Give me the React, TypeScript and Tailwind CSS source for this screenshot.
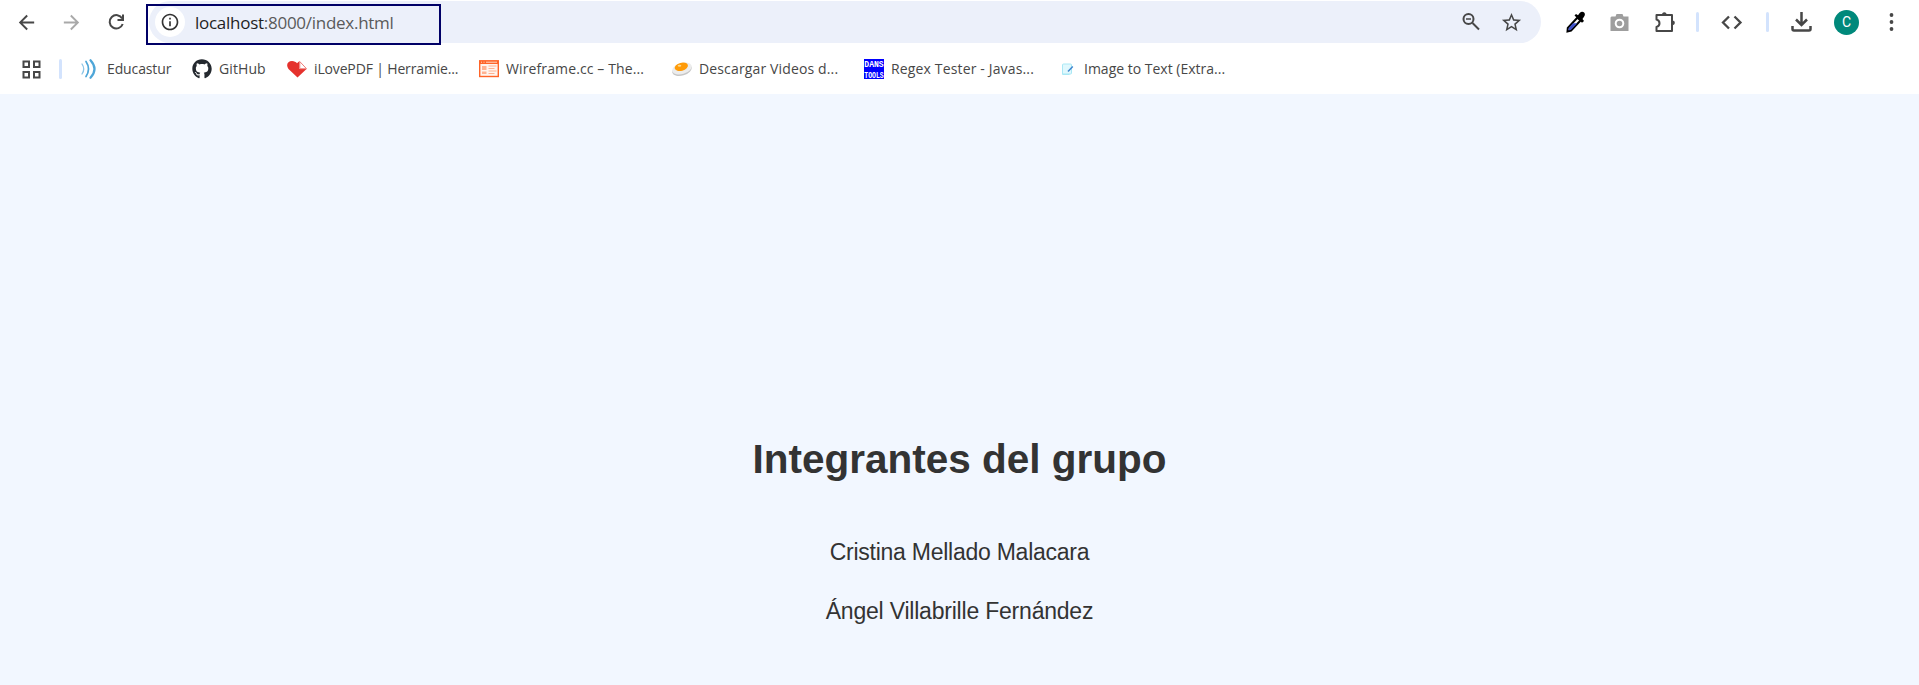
import type { ReactNode } from "react";
import { MdArrowBack, MdArrowForward, MdInfoOutline, MdStarOutline } from "react-icons/md";
import { FaGithub } from "react-icons/fa";

const svg = "block h-5 w-5 shrink-0";

const Educastur = () => (
  <svg className={svg} viewBox="0 0 20 20" fill="none" stroke="#4ea6d8" strokeLinecap="round">
    <path d="M2 5Q5.500 10 2 15" strokeWidth="1.300" stroke="#8cc5e6" />
    <path d="M6 2.500Q11 10 6 17.500" strokeWidth="1.700" />
    <path d="M10.500 1.200Q18.500 10 10.500 18.800" strokeWidth="2.200" />
  </svg>
);

const Heart = () => (
  <svg className={svg} viewBox="0 0 20 20">
    <path d="M10.500 18.500 1.500 10C-1.500 6 .8 2 5 2c2.400 0 3.800 1 5 2.200L12.500 2v8H19.500Z" fill="#e5322d" />
    <path d="M12.800 2.600v7.100h6.700Z" fill="#fff" stroke="#ee7d79" strokeWidth="1" />
  </svg>
);

const Wireframe = () => (
  <svg className={svg} viewBox="0 0 20 20">
    <rect x="0.700" y="2" width="18.600" height="15.500" fill="#fff4ee" stroke="#ff6428" strokeWidth="1.400" />
    <path d="M0 1.300h20v3.700H0z" fill="#ff6428" />
    <path d="M2 3.200h1M4.500 3.200h1M7 3.200h11" stroke="#ffd8c6" strokeWidth="1" />
    <path d="M3 7h4.500v4H3zM3 12.500h4.500v2.500H3z" fill="#ffb291" />
    <path d="M9.500 7h8M9.500 9.500h6M9.500 12h8M9.500 14.500h6" stroke="#ffb291" strokeWidth="1.200" />
  </svg>
);

const Egg = () => (
  <svg className={svg} viewBox="0 0 20 20">
    <ellipse cx="10" cy="11" rx="10" ry="5.600" transform="rotate(-17 10 11)" fill="#c6c6c6" />
    <ellipse cx="10" cy="9.500" rx="10" ry="5.600" transform="rotate(-17 10 9.500)" fill="#ececec" />
    <ellipse cx="9.300" cy="7.800" rx="6.800" ry="4" transform="rotate(-15 9.300 7.800)" fill="#ff9b08" />
    <ellipse cx="7.500" cy="6.800" rx="1.800" ry="1" fill="#ffd98a" />
  </svg>
);

const DansTools = () => (
  <svg className="block h-5 w-5 shrink-0 overflow-visible" viewBox="0 0 20 20">
    <rect width="20" height="20" fill="#0000fe" />
    <g fill="#fff" fontFamily="Liberation Mono" fontWeight="700" fontSize="9.200">
      <text x="0.300" y="8" textLength="19.400" lengthAdjust="spacingAndGlyphs">DANS</text>
      <text x="0.300" y="18.700" textLength="19.400" lengthAdjust="spacingAndGlyphs">TOOLS</text>
    </g>
  </svg>
);

const NoteEdit = () => (
  <svg className={svg} viewBox="0 0 20 20">
    <rect x="5.500" y="5" width="9" height="10" rx="1" fill="#e0f8fd" stroke="#a9e8f5" />
    <path d="M5.500 9v6.500h7" fill="none" stroke="#a9e8f5" />
    <path d="M11 12.500 15.800 7.500" stroke="#3f86cf" strokeWidth="1.500" />
  </svg>
);

const bookmarks: { icon: ReactNode; label: string; width: string; spacing: string }[] = [
  { icon: <Educastur />, label: "Educastur", width: "w-[112px]", spacing: "tracking-[-0.12px]" },
  { icon: <FaGithub className={svg} color="#24292f" />, label: "GitHub", width: "w-[95px]", spacing: "tracking-[0.1px]" },
  { icon: <Heart />, label: "iLovePDF | Herramie...", width: "w-[192px]", spacing: "tracking-[-0.15px]" },
  { icon: <Wireframe />, label: "Wireframe.cc – The...", width: "w-[193px]", spacing: "tracking-[0.12px]" },
  { icon: <Egg />, label: "Descargar Videos d...", width: "w-[192px]", spacing: "tracking-[0.14px]" },
  { icon: <DansTools />, label: "Regex Tester - Javas...", width: "w-[193px]", spacing: "tracking-[0.15px]" },
  { icon: <NoteEdit />, label: "Image to Text (Extra...", width: "w-[180px]", spacing: "tracking-[0px]" },
];

const Divider = ({ className = "" }: { className?: string }) => (
  <span className={`h-5 w-[3px] shrink-0 rounded-full bg-[#d3e3fd] ${className}`} />
);

function Toolbar() {
  return (
    <div className="flex h-[44px] items-center text-[#474747]">
      <MdArrowBack className="ml-[15px] h-[23px] w-[23px] shrink-0" />
      <MdArrowForward className="ml-[22px] h-[23px] w-[23px] shrink-0 text-[#a9a9a9]" />
      <svg className="ml-[22px] h-[22px] w-[22px] shrink-0" viewBox="0 0 22 22" fill="none" stroke="currentColor" strokeWidth="2">
        <path d="M17.200 7.500A6.700 6.700 0 1 0 17.700 13" />
        <path d="M18 3.500v5.500H12.500" />
      </svg>
      <div className="relative ml-[22px] flex h-[42px] w-[1392px] shrink-0 items-center rounded-full bg-[#ecf0fa]">
        <div className="absolute top-[3px] -left-[3px] h-[41px] w-[295px] border-2 border-[#000066]" />
        <span className="ml-[6px] flex h-[30px] w-[30px] items-center justify-center rounded-full bg-white">
          <MdInfoOutline className="h-5 w-5 text-[#333]" />
        </span>
        <span className="ml-[10px] pt-px text-[17px] leading-6 tracking-[-0.27px] whitespace-nowrap text-[#5a5a5a]">
          <span className="text-[#1f1f1f]">localhost</span>:8000/index.html
        </span>
        <svg className="mr-[19px] ml-auto h-5 w-5" viewBox="0 0 20 20" fill="none" stroke="currentColor" strokeWidth="2">
          <circle cx="7.500" cy="7" r="5" />
          <path d="M11.500 11 18 17.500" />
          <path d="M5 7h5" strokeWidth="1.500" />
        </svg>
        <MdStarOutline className="mr-[18px] h-[23px] w-[23px]" />
      </div>
      <svg className="ml-[25px] h-[22px] w-[20px] shrink-0" viewBox="0 0 20 22">
        <path d="M1.800 17 11.500 6.500 14.500 9.500 5 19.500 1.500 20.500Z" fill="#fff" stroke="#000" strokeWidth="2" />
        <path d="M2.800 17 7 12.300h4.300L5 18.700 2.500 19.500Z" fill="#3f51c8" />
        <path d="m8.500 4.500 1.500-1.500 2 1.200 1.700-2.200c3-3 7 .500 4.300 3.700L16.500 8l1.500 2-2 1.800Z" fill="#000" />
      </svg>
      <svg className="ml-[23px] h-[22px] w-[21px] shrink-0" viewBox="0 0 21 22">
        <path d="M2.500 5.500h4L7.500 3h6l1 2.500h5v14.500H1.500V6.500Z" fill="#9e9e9e" />
        <circle cx="10.500" cy="12.500" r="3.800" fill="none" stroke="#fff" strokeWidth="2" />
      </svg>
      <svg className="ml-[24px] h-[22px] w-[22px] shrink-0" viewBox="0 0 22 22" fill="none" stroke="currentColor" strokeWidth="2">
        <path d="M2.500 4h15.500v16H2.500V16C6.500 15 6.500 9.500 2.500 8.500Z" strokeLinejoin="round" />
        <path d="M8 4a2.300 2.800 0 0 1 4.600 0ZM18 9.500a2.800 2.300 0 0 1 0 4.600Z" fill="currentColor" stroke="none" />
      </svg>
      <Divider className="ml-[20px]" />
      <svg className="ml-[22px] h-5 w-[22px] shrink-0" viewBox="0 0 22 20" fill="none" stroke="currentColor" strokeWidth="2.300">
        <path d="M8 4.500 2 10.500l6 6M13.500 4.500l6 6-6 6" />
      </svg>
      <Divider className="ml-[23px]" />
      <svg className="ml-[22px] h-[22px] w-[22px] shrink-0" viewBox="0 0 22 22" fill="none" stroke="currentColor" strokeWidth="2.500">
        <path d="M10.500 1v13M5 8.500 10.500 14l5.500-5.500M1.500 15v3q0 1.500 1.500 1.500h15q1.500 0 1.500-1.500v-3" />
      </svg>
      <span className="ml-[21px] flex h-[25px] w-[25px] shrink-0 items-center justify-center rounded-full bg-[#00897b] font-['Roboto',sans-serif] text-[14px] text-white">
        C
      </span>
      <svg className="ml-[28px] h-5 w-[9px] shrink-0" viewBox="0 0 9 20" fill="currentColor">
        <circle cx="4.500" cy="3" r="1.900" />
        <circle cx="4.500" cy="10" r="1.900" />
        <circle cx="4.500" cy="17" r="1.900" />
      </svg>
    </div>
  );
}

function BookmarksBar() {
  return (
    <div className="flex h-[50px] items-center text-[14px] leading-5 text-[#474747]">
      <svg className="ml-[22px] h-[19px] w-[19px] shrink-0" viewBox="0 0 19 19" fill="none" stroke="currentColor" strokeWidth="2">
        <path d="M1.500 1.500h5.500v5.500H1.500zM12 1.500h5.500v5.500H12zM1.500 12h5.500v5.500H1.500zM12 12h5.500v5.500H12z" />
      </svg>
      <Divider className="ml-[18px]" />
      <div className="ml-[18px] flex">
        {bookmarks.map((b) => (
          <div key={b.label} className={`flex shrink-0 items-center gap-[7px] ${b.width}`}>
            {b.icon}
            <span className={`whitespace-nowrap ${b.spacing}`}>{b.label}</span>
          </div>
        ))}
      </div>
    </div>
  );
}

export default function App() {
  return (
    <div className="flex h-[685px] w-[1919px] flex-col overflow-hidden bg-white font-['Open_Sans',sans-serif]">
      <Toolbar />
      <BookmarksBar />
      <main className="flex flex-1 flex-col items-center bg-[#f2f7ff] pt-[341px] font-['Liberation_Sans',sans-serif] text-[#333]">
        <h1 className="text-[40.500px] leading-[48px] font-bold">Integrantes del grupo</h1>
        <p className="mt-[55px] text-[23px] leading-7 tracking-[-0.25px]">Cristina Mellado Malacara</p>
        <p className="mt-[31px] text-[23px] leading-7 tracking-[-0.21px]">Ángel Villabrille Fernández</p>
      </main>
    </div>
  );
}
